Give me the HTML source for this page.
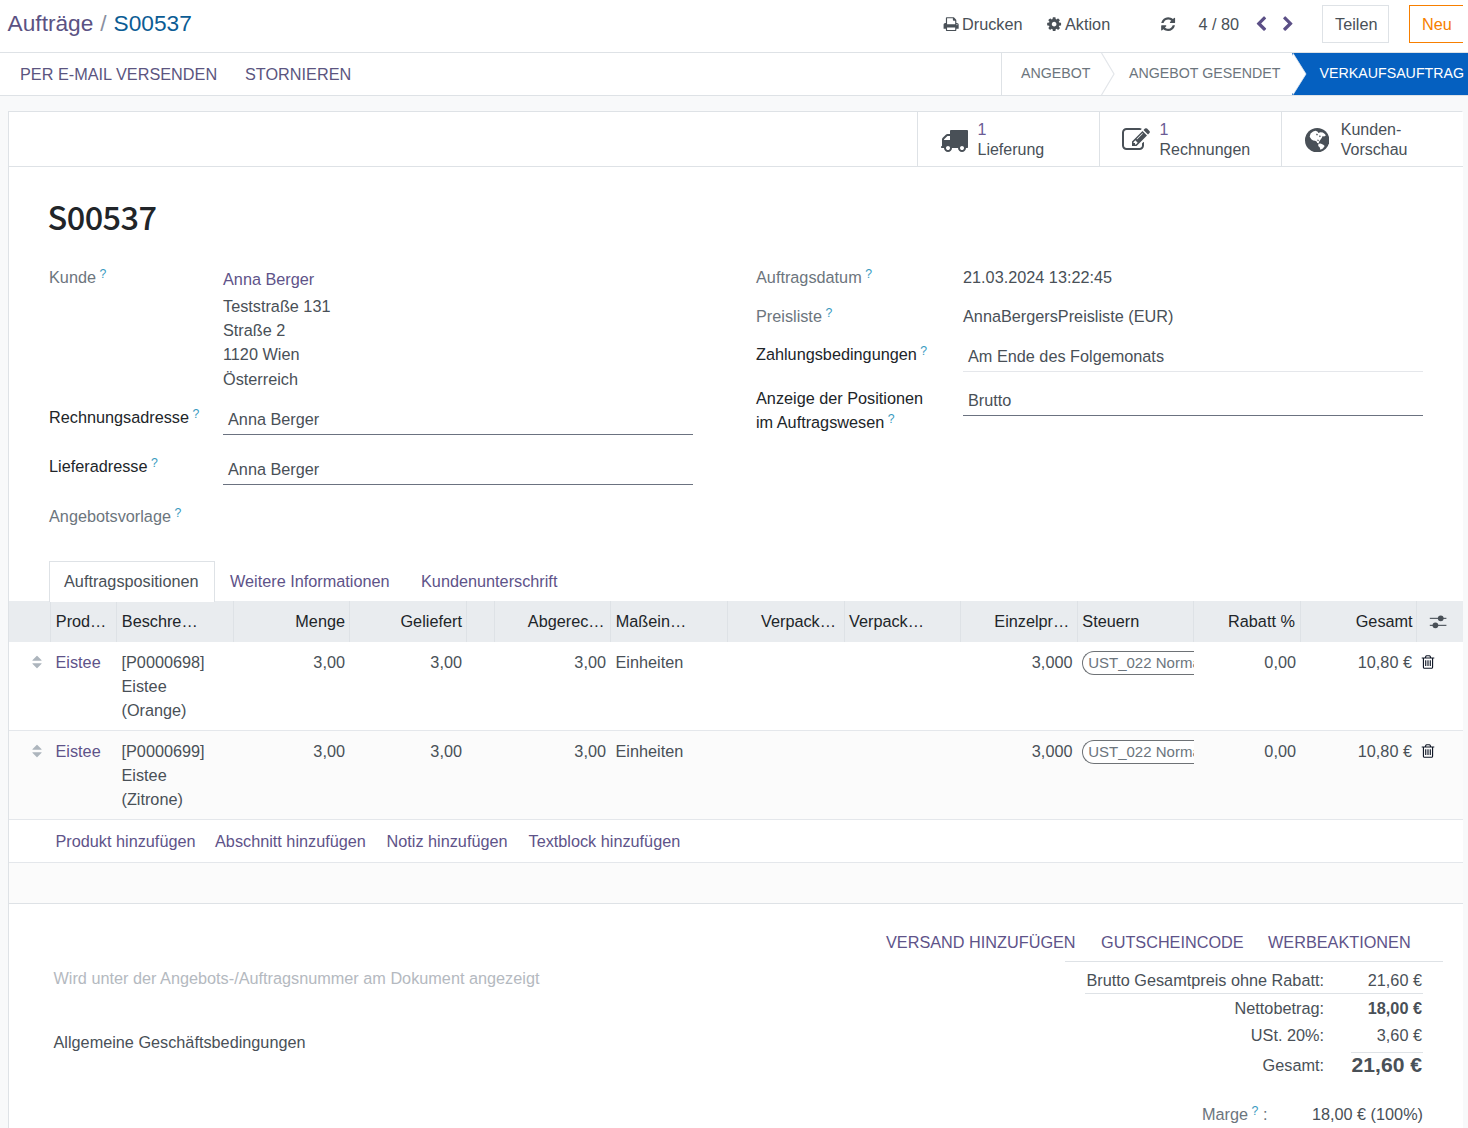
<!DOCTYPE html>
<html lang="de">
<head>
<meta charset="utf-8">
<title>Aufträge / S00537</title>
<style>
*{box-sizing:border-box;margin:0;padding:0}
html,body{width:1468px;height:1128px;overflow:hidden}
body{position:relative;background:#f8f9fa;font-family:"Liberation Sans",Arial,sans-serif;font-size:16.25px;line-height:24.375px;color:#495057}
.abs{position:absolute;white-space:nowrap}
a{color:#5e5389;text-decoration:none}
svg{display:block}
/* top control panel */
#cp{position:absolute;left:0;top:0;width:1468px;height:53px;background:#fff;border-bottom:1px solid #dee2e6}
#bc{left:7.6px;top:7.8px;font-size:22.7px;line-height:30px;color:#5b5283}
#bc b{font-weight:normal;color:#0b5c94}
#bc i{font-style:normal;color:#8a8fa0;padding:0 0.65px}
.cpt{top:12px;line-height:24px;color:#495057}
.btn{position:absolute;top:5px;height:38px;border:1px solid #dee2e6;border-radius:0;background:#fff;line-height:36px;text-align:left}
/* button bar */
#bb{position:absolute;left:0;top:53px;width:1468px;height:43px;background:#fff;border-bottom:1px solid #dee2e6}
.bbt{top:9px;line-height:24px;color:#5b5580}
.st{top:0;height:42px;line-height:41px;font-size:14.22px;color:#6c757d}
/* sheet */
#sheet{position:absolute;left:8px;top:111px;width:1455px;height:1030px;background:#fff;border:1px solid #dee2e6;border-bottom:0;border-right:1px solid #fff}
#bbox{position:absolute;left:0;top:0;width:1454px;height:55px;border-bottom:1px solid #dee2e6}
.sb{position:absolute;top:0;height:54px;width:182px;border-left:1px solid #dee2e6}
.sb .n{font-size:16px;position:absolute;left:59.5px;top:7.6px;line-height:20px;color:#6b5b95}
.sb .t{font-size:16px;position:absolute;left:59.5px;top:28px;line-height:20px;color:#495057}
.lbl{color:#212529}
.lbl.ro{color:#6c757d}
sup.q{color:#3a9bbf;font-size:12.3px;line-height:0;position:relative;top:-4.8px;vertical-align:baseline;margin-left:3.5px}
.ul{position:absolute;height:1px;background:#6b7280}
#title{font-family:"Noto Sans CJK SC","Liberation Sans",sans-serif;font-weight:500;font-size:32.5px;line-height:44px;color:#212529;letter-spacing:-0.6px}
/* table */
.th{position:absolute;top:0;height:40px;line-height:40px;color:#212529;border-left:1px solid #dee2e6;padding:0 5px;overflow:hidden;white-space:nowrap}
.th2{line-height:41.5px;color:#212529}
.r{text-align:right}
.td{position:absolute;white-space:nowrap;line-height:24.375px}
.tag{position:absolute;height:24px;border:1px solid #6e7276;border-right:0;border-radius:12px 0 0 12px;padding-left:5.2px;line-height:21.4px;font-size:15px;color:#6c757d;overflow:hidden;white-space:nowrap;background:#fff}
</style>
</head>
<body>

<!-- CONTROL PANEL -->
<div id="cp">
  <div id="bc" class="abs">Aufträge<i> / </i><b>S00537</b></div>
  <svg class="abs" style="left:942.8px;top:15.8px" width="16.25" height="16.25" viewBox="0 0 1792 1792"><path fill="#495057" d="M448 1536h896v-256h-896v256zm0-640h896v-384h-160q-40 0-68-28t-28-68v-160h-640v640zm1152 64q0-26-19-45t-45-19-45 19-19 45 19 45 45 19 45-19 19-45zm128 0v416q0 13-9.5 22.5t-22.5 9.5h-224v160q0 40-28 68t-68 28h-960q-40 0-68-28t-28-68v-160h-224q-13 0-22.5-9.5t-9.5-22.5v-416q0-79 56.5-135.5t135.5-56.5h64v-544q0-40 28-68t68-28h672q40 0 88 20t76 48l152 152q28 28 48 76t20 88v256h64q79 0 135.5 56.5t56.5 135.5z"/></svg>
  <div class="abs cpt" style="left:962px">Drucken</div>
  <svg class="abs" style="left:1046px;top:15.8px" width="16.25" height="16.25" viewBox="0 0 1792 1792"><path fill="#495057" d="M1152 896q0-106-75-181t-181-75-181 75-75 181 75 181 181 75 181-75 75-181zm512-109v222q0 12-8 23t-20 13l-185 28q-19 54-39 91 35 50 107 138 10 12 10 25t-9 23q-27 37-99 108t-94 71q-12 0-26-9l-138-108q-44 23-91 38-16 136-29 186-7 28-36 28h-222q-14 0-24.5-8.5t-11.5-21.5l-28-184q-49-16-90-37l-141 107q-10 9-25 9-14 0-25-11-126-114-165-168-7-10-7-23 0-12 8-23 15-21 51-66.5t54-70.5q-27-50-41-99l-183-27q-13-2-21-12.5t-8-23.5v-222q0-12 8-23t19-13l186-28q14-46 39-92-40-57-107-138-10-12-10-24 0-10 9-23 26-36 98.5-107.5t94.5-71.5q13 0 26 10l138 107q44-23 91-38 16-136 29-186 7-28 36-28h222q14 0 24.5 8.5t11.5 21.5l28 184q49 16 90 37l142-107q9-9 24-9 13 0 25 10 129 119 165 170 7 8 7 22 0 12-8 23-15 21-51 66.5t-54 70.5q26 50 41 98l183 28q13 2 21 12.5t8 23.5z"/></svg>
  <div class="abs cpt" style="left:1065px">Aktion</div>
  <svg class="abs" style="left:1159.7px;top:15.8px" width="16.25" height="16.25" viewBox="0 0 1792 1792"><path fill="#495057" d="M1639 1056q0 5-1 7-64 268-268 434.5t-478 166.5q-146 0-282.5-55t-243.5-157l-129 129q-19 19-45 19t-45-19-19-45v-448q0-26 19-45t45-19h448q26 0 45 19t19 45-19 45l-137 137q71 66 161 102t187 36q134 0 250-65t186-179q11-17 53-117 8-23 30-23h192q13 0 22.5 9.5t9.5 22.5zm25-800v448q0 26-19 45t-45 19h-448q-26 0-45-19t-19-45 19-45l138-138q-148-137-349-137-134 0-250 65t-186 179q-11 17-53 117-8 23-30 23h-199q-13 0-22.5-9.5t-9.5-22.5v-7q65-268 270-434.5t480-166.5q146 0 284 55.5t245 156.5l130-129q19-19 45-19t45 19 19 45z"/></svg>
  <div class="abs cpt" style="left:1198.5px">4 / 80</div>
  <svg class="abs" style="left:1252.5px;top:16.3px" width="16.25" height="16.25" viewBox="0 0 1792 1792"><path fill="#5b4f86" d="M1427 301l-531 531 531 531q19 19 19 45t-19 45l-166 166q-19 19-45 19t-45-19l-742-742q-19-19-19-45t19-45l742-742q19-19 45-19t45 19l166 166q19 19 19 45t-19 45z"/></svg>
  <svg class="abs" style="left:1279.7px;top:16.3px" width="16.25" height="16.25" viewBox="0 0 1792 1792"><path fill="#5b4f86" d="M1363 877l-742 742q-19 19-45 19t-45-19l-166-166q-19-19-19-45t19-45l531-531-531-531q-19-19-19-45t19-45l166-166q19-19 45-19t45 19l742 742q19 19 19 45t-19 45z"/></svg>
  <div class="btn" style="left:1322px;width:67px;padding-left:12px;color:#495057">Teilen</div>
  <div class="btn" style="left:1409px;width:60px;padding-left:12px;color:#f77f00;border-color:#f77f00;border-right:0;width:54px">Neu</div>
</div>

<!-- BUTTON BAR -->
<div id="bb">
  <div class="abs bbt" style="left:20px">PER E-MAIL VERSENDEN</div>
  <div class="abs bbt" style="left:245px">STORNIEREN</div>
  <div class="abs" style="left:1001px;top:0;width:1px;height:42px;background:#dee2e6"></div>
  <div class="abs st" style="left:1021px">ANGEBOT</div>
  <svg class="abs" style="left:1100px;top:0" width="16" height="42" viewBox="0 0 16 42"><path d="M1.5 0 L14 21 L1.5 42" fill="none" stroke="#e3e6ea" stroke-width="1.2"/></svg>
  <div class="abs st" style="left:1129px">ANGEBOT GESENDET</div>
  <svg class="abs" style="left:1291px;top:0" width="177" height="42" viewBox="0 0 177 42"><path d="M1 0 H177 V42 H1 Z" fill="#0560c0"/><path d="M1 2.5 L2 0.3 L15 21 L2 41.7 L1 39.5 Z" fill="#fff"/><path d="M2 0.3 L15 21 L2 41.7" fill="none" stroke="#e3e8ef" stroke-width="0.8"/></svg>
  <div class="abs st" style="left:1319.5px;color:#fff">VERKAUFSAUFTRAG</div>
</div>

<!-- SHEET -->
<div id="sheet">
  <div id="bbox">
  <div class="sb" style="left:908px">
    <svg class="abs" style="left:22px;top:14px" width="28" height="28" viewBox="0 0 1792 1792"><path fill="#495057" d="M640 1408q0-52-38-90t-90-38-90 38-38 90 38 90 90 38 90-38 38-90zm-384-512h384v-256h-158q-13 0-22 9l-195 195q-9 9-9 22v30zm1280 512q0-52-38-90t-90-38-90 38-38 90 38 90 90 38 90-38 38-90zm256-1088v1024q0 15-4 26.5t-13.5 18.5-16.5 11.5-23.5 6-22.5 2-25.5 0-22.5-.5q0 106-75 181t-181 75-181-75-75-181h-384q0 106-75 181t-181 75-181-75-75-181h-64q-3 0-22.5.5t-25.5 0-22.5-2-23.5-6-16.5-11.5-13.5-18.5-4-26.5q0-26 19-45t45-19v-320q0-8-.5-35t0-38 2.5-34.5 6.5-37 14-30.5 22.5-30l198-198q19-19 50.5-32t58.5-13h160v-192q0-26 19-45t45-19h1024q26 0 45 19t19 45z"/></svg>
    <div class="n">1</div><div class="t">Lieferung</div>
  </div>
  <div class="sb" style="left:1090px">
    <svg class="abs" style="left:21.7px;top:14px" width="28" height="28" viewBox="0 0 1792 1792"><path fill="#495057" d="M888 1184l116-116-152-152-116 116v56h96v96h56zm440-720q-16-16-33 1l-350 350q-17 17-1 33t33-1l350-350q17-17 1-33zm80 594v190q0 119-84.5 203.5t-203.5 84.5h-832q-119 0-203.5-84.5t-84.5-203.5v-832q0-119 84.5-203.5t203.5-84.5h832q63 0 117 25 15 7 18 23 3 17-9 29l-49 49q-14 14-32 8-23-6-45-6h-832q-66 0-113 47t-47 113v832q0 66 47 113t113 47h832q66 0 113-47t47-113v-126q0-13 9-22l64-64q15-15 35-7t20 29zm-96-738l288 288-672 672h-288v-288zm444 132l-92 92-288-288 92-92q28-28 68-28t68 28l152 152q28 28 28 68t-28 68z"/></svg>
    <div class="n">1</div><div class="t">Rechnungen</div>
  </div>
  <div class="sb" style="left:1272px;width:181px">
    <svg class="abs" style="left:22.8px;top:15.7px" width="24.4" height="24.4" viewBox="0 0 24 24"><circle cx="12" cy="12" r="12" fill="#495057"/><path fill="#fff" d="M4.6 8.5 L5.5 5.5 L8 3.4 L10.5 2.8 L12.5 3.6 L13.2 5 L15 4.2 L17.5 4.4 L19.8 6.2 L20.4 7.6 L18.6 8.4 L17.4 7.8 L16.6 9.6 L15.2 11.6 L14 13.4 L13.4 15 L12 14.8 L11.4 13.2 L9.8 12.6 L8 12.4 L6.2 11 Z M13.2 15.6 L15.4 15.2 L18 16.4 L19.4 17.8 L17.6 20.2 L15.2 21.4 L14.4 19 L13 17.6 Z"/><path fill="#495057" d="M11.5 5.5l1.200.6-.6 1.200-1.200-.4zM14.6 7.200l1 .8-1 1-.8-.8zM12.4 11.400l1.200.4-.4 1.200-1.200-.6z"/></svg>
    <div class="t" style="top:8px;left:58.8px">Kunden-</div><div class="t" style="left:58.8px">Vorschau</div>
  </div>
</div>

  <div class="abs" id="title" style="left:38.6px;top:82px">S00537</div>
  <div class="abs lbl ro" style="left:40px;top:152.61px">Kunde<sup class="q">?</sup></div>
  <div class="abs" style="left:214px;top:154.61px"><a>Anna Berger</a></div>
  <div class="abs" style="left:214px;top:181.61px">Teststraße 131</div>
  <div class="abs" style="left:214px;top:205.99px">Straße 2</div>
  <div class="abs" style="left:214px;top:230.36px">1120 Wien</div>
  <div class="abs" style="left:214px;top:254.74px">Österreich</div>
  <div class="abs lbl" style="left:40px;top:292.61px">Rechnungsadresse<sup class="q">?</sup></div>
  <div class="abs" style="left:219px;top:294.61px">Anna Berger</div>
  <div class="ul" style="left:214px;top:322px;width:470px"></div>
  <div class="abs lbl" style="left:40px;top:341.61px">Lieferadresse<sup class="q">?</sup></div>
  <div class="abs" style="left:219px;top:344.61px">Anna Berger</div>
  <div class="ul" style="left:214px;top:372px;width:470px"></div>
  <div class="abs lbl ro" style="left:40px;top:391.61px">Angebotsvorlage<sup class="q">?</sup></div>
  <div class="abs lbl ro" style="left:747px;top:152.61px">Auftragsdatum<sup class="q">?</sup></div>
  <div class="abs" style="left:954px;top:152.61px">21.03.2024 13:22:45</div>
  <div class="abs lbl ro" style="left:747px;top:191.61px">Preisliste<sup class="q">?</sup></div>
  <div class="abs" style="left:954px;top:191.61px">AnnaBergersPreisliste (EUR)</div>
  <div class="abs lbl" style="left:747px;top:229.61px">Zahlungsbedingungen<sup class="q">?</sup></div>
  <div class="abs" style="left:959px;top:231.61px">Am Ende des Folgemonats</div>
  <div class="ul" style="left:954px;top:259px;width:460px;background:#e5e7eb"></div>
  <div class="abs lbl" style="left:747px;top:273.61px">Anzeige der Positionen<br>im Auftragswesen<sup class="q">?</sup></div>
  <div class="abs" style="left:959px;top:275.61px">Brutto</div>
  <div class="ul" style="left:954px;top:303px;width:460px"></div>
  <div class="abs" style="left:40px;top:449px;width:166px;height:41px;border:1px solid #dee2e6;border-bottom:0;background:#fff;z-index:2"></div>
  <div class="abs" style="left:55px;top:456.61px;z-index:3;color:#495057">Auftragspositionen</div>
  <div class="abs" style="left:221px;top:456.61px"><a>Weitere Informationen</a></div>
  <div class="abs" style="left:412px;top:456.61px"><a>Kundenunterschrift</a></div>

  <div class="abs" style="left:0;top:489px;width:1454px;height:41px;background:#e9ecef"></div>
  <div class="abs" style="left:41px;top:489px;width:1px;height:41px;background:#dee2e6"></div>
  <div class="abs" style="left:107px;top:489px;width:1px;height:41px;background:#dee2e6"></div>
  <div class="abs" style="left:224px;top:489px;width:1px;height:41px;background:#dee2e6"></div>
  <div class="abs" style="left:340px;top:489px;width:1px;height:41px;background:#dee2e6"></div>
  <div class="abs" style="left:457px;top:489px;width:1px;height:41px;background:#dee2e6"></div>
  <div class="abs" style="left:485px;top:489px;width:1px;height:41px;background:#dee2e6"></div>
  <div class="abs" style="left:601px;top:489px;width:1px;height:41px;background:#dee2e6"></div>
  <div class="abs" style="left:718px;top:489px;width:1px;height:41px;background:#dee2e6"></div>
  <div class="abs" style="left:835px;top:489px;width:1px;height:41px;background:#dee2e6"></div>
  <div class="abs" style="left:951px;top:489px;width:1px;height:41px;background:#dee2e6"></div>
  <div class="abs" style="left:1068px;top:489px;width:1px;height:41px;background:#dee2e6"></div>
  <div class="abs" style="left:1184px;top:489px;width:1px;height:41px;background:#dee2e6"></div>
  <div class="abs" style="left:1291px;top:489px;width:1px;height:41px;background:#dee2e6"></div>
  <div class="abs" style="left:1407px;top:489px;width:1px;height:41px;background:#dee2e6"></div>
  <div class="abs th2" style="left:46.8px;top:489px">Prod…</div>
  <div class="abs th2" style="left:112.8px;top:489px">Beschre…</div>
  <div class="abs th2" style="right:1117.0px;top:489px">Menge</div>
  <div class="abs th2" style="right:1000.1px;top:489px">Geliefert</div>
  <div class="abs th2" style="left:518.8px;top:489px">Abgerec…</div>
  <div class="abs th2" style="left:606.8px;top:489px">Maßein…</div>
  <div class="abs th2" style="left:752.0px;top:489px">Verpack…</div>
  <div class="abs th2" style="left:840.0px;top:489px">Verpack…</div>
  <div class="abs th2" style="left:985.3px;top:489px">Einzelpr…</div>
  <div class="abs th2" style="left:1073.3px;top:489px">Steuern</div>
  <div class="abs th2" style="right:167.1px;top:489px">Rabatt %</div>
  <div class="abs th2" style="right:49.4px;top:489px">Gesamt</div>
  <svg class="abs" style="left:1419.5px;top:501px" width="18" height="18" viewBox="0 0 18 18"><g fill="#495057"><rect x="0.8" y="4.8" width="16.6" height="1.1"/><rect x="0.8" y="11.8" width="16.6" height="1.1"/><circle cx="11.75" cy="5.35" r="2.9"/><circle cx="6.4" cy="12.35" r="2.9"/></g></svg>
  <div class="abs" style="left:0;top:529.5px;width:1454px;height:89px;background:#fff;border-bottom:1px solid #e4e7eb"></div>
  <svg class="abs" style="left:20px;top:542px" width="16" height="16" viewBox="0 0 1792 1792"><path fill="#adb5bd" d="M1408 1088q0 26-19 45l-448 448q-19 19-45 19t-45-19l-448-448q-19-19-19-45t19-45 45-19h896q26 0 45 19t19 45zm0-384q0 26-19 45t-45 19h-896q-26 0-45-19t-19-45 19-45l448-448q19-19 45-19t45 19l448 448q19 19 19 45z"/></svg>
  <div class="td" style="left:46.5px;top:537.61px"><a>Eistee</a></div>
  <div class="td" style="left:112.5px;top:537.61px">[P0000698]<br>Eistee<br>(Orange)</div>
  <div class="td r" style="right:1117px;top:537.61px">3,00</div>
  <div class="td r" style="right:1000px;top:537.61px">3,00</div>
  <div class="td r" style="right:856px;top:537.61px">3,00</div>
  <div class="td r" style="right:389.5px;top:537.61px">3,000</div>
  <div class="td r" style="right:166px;top:537.61px">0,00</div>
  <div class="td r" style="right:50px;top:537.61px">10,80 €</div>
  <div class="td" style="left:606.5px;top:537.61px">Einheiten</div>
  <div class="tag" style="left:1073px;top:539px;width:112px">UST_022 Normalsteuersatz</div>
  <svg class="abs" style="left:1411px;top:542px" width="16" height="16" viewBox="0 0 1792 1792"><path fill="#111827" d="M704 736v576q0 14-9 23t-23 9h-64q-14 0-23-9t-9-23v-576q0-14 9-23t23-9h64q14 0 23 9t9 23zm256 0v576q0 14-9 23t-23 9h-64q-14 0-23-9t-9-23v-576q0-14 9-23t23-9h64q14 0 23 9t9 23zm256 0v576q0 14-9 23t-23 9h-64q-14 0-23-9t-9-23v-576q0-14 9-23t23-9h64q14 0 23 9t9 23zm128 724v-948h-896v948q0 22 7 40.5t14.5 27 10.5 8.5h832q3 0 10.5-8.5t14.5-27 7-40.5zm-672-1076h448l-48-117q-7-9-17-11h-317q-10 2-17 11zm928 32v64q0 14-9 23t-23 9h-96v948q0 83-47 143.5t-113 60.5h-832q-66 0-113-58.5t-47-141.5v-952h-96q-14 0-23-9t-9-23v-64q0-14 9-23t23-9h309l70-167q15-37 54-63t79-26h320q40 0 79 26t54 63l70 167h309q14 0 23 9t9 23z"/></svg>
  <div class="abs" style="left:0;top:618.5px;width:1454px;height:89px;background:#fbfbfb;border-bottom:1px solid #e4e7eb"></div>
  <svg class="abs" style="left:20px;top:631px" width="16" height="16" viewBox="0 0 1792 1792"><path fill="#adb5bd" d="M1408 1088q0 26-19 45l-448 448q-19 19-45 19t-45-19l-448-448q-19-19-19-45t19-45 45-19h896q26 0 45 19t19 45zm0-384q0 26-19 45t-45 19h-896q-26 0-45-19t-19-45 19-45l448-448q19-19 45-19t45 19l448 448q19 19 19 45z"/></svg>
  <div class="td" style="left:46.5px;top:626.61px"><a>Eistee</a></div>
  <div class="td" style="left:112.5px;top:626.61px">[P0000699]<br>Eistee<br>(Zitrone)</div>
  <div class="td r" style="right:1117px;top:626.61px">3,00</div>
  <div class="td r" style="right:1000px;top:626.61px">3,00</div>
  <div class="td r" style="right:856px;top:626.61px">3,00</div>
  <div class="td r" style="right:389.5px;top:626.61px">3,000</div>
  <div class="td r" style="right:166px;top:626.61px">0,00</div>
  <div class="td r" style="right:50px;top:626.61px">10,80 €</div>
  <div class="td" style="left:606.5px;top:626.61px">Einheiten</div>
  <div class="tag" style="left:1073px;top:628px;width:112px">UST_022 Normalsteuersatz</div>
  <svg class="abs" style="left:1411px;top:631px" width="16" height="16" viewBox="0 0 1792 1792"><path fill="#111827" d="M704 736v576q0 14-9 23t-23 9h-64q-14 0-23-9t-9-23v-576q0-14 9-23t23-9h64q14 0 23 9t9 23zm256 0v576q0 14-9 23t-23 9h-64q-14 0-23-9t-9-23v-576q0-14 9-23t23-9h64q14 0 23 9t9 23zm256 0v576q0 14-9 23t-23 9h-64q-14 0-23-9t-9-23v-576q0-14 9-23t23-9h64q14 0 23 9t9 23zm128 724v-948h-896v948q0 22 7 40.5t14.5 27 10.5 8.5h832q3 0 10.5-8.5t14.5-27 7-40.5zm-672-1076h448l-48-117q-7-9-17-11h-317q-10 2-17 11zm928 32v64q0 14-9 23t-23 9h-96v948q0 83-47 143.5t-113 60.5h-832q-66 0-113-58.5t-47-141.5v-952h-96q-14 0-23-9t-9-23v-64q0-14 9-23t23-9h309l70-167q15-37 54-63t79-26h320q40 0 79 26t54 63l70 167h309q14 0 23 9t9 23z"/></svg>
  <div class="abs" style="left:0;top:707.5px;width:1454px;height:43.5px;background:#fff;border-bottom:1px solid #e4e7eb"></div>
  <div class="td" style="left:46.5px;top:716.61px"><a>Produkt hinzufügen</a></div>
  <div class="td" style="left:206px;top:716.61px"><a>Abschnitt hinzufügen</a></div>
  <div class="td" style="left:377.5px;top:716.61px"><a>Notiz hinzufügen</a></div>
  <div class="td" style="left:519.5px;top:716.61px"><a>Textblock hinzufügen</a></div>
  <div class="abs" style="left:0;top:751px;width:1454px;height:40.5px;background:#fbfbfb;border-bottom:1px solid #dee2e6"></div>
  <div class="td" style="left:877px;top:817.61px"><a>VERSAND HINZUFÜGEN</a></div>
  <div class="td" style="left:1092px;top:817.61px"><a>GUTSCHEINCODE</a></div>
  <div class="td" style="left:1259px;top:817.61px"><a>WERBEAKTIONEN</a></div>
  <div class="ul" style="left:1056px;top:849px;width:378px;background:#dee2e6"></div>
  <div class="td r" style="right:138px;top:855.61px">Brutto Gesamtpreis ohne Rabatt:</div>
  <div class="td r" style="right:40px;top:855.61px;">21,60 €</div>
  <div class="ul" style="left:1076px;top:881px;width:338px;background:#dee2e6"></div>
  <div class="td r" style="right:138px;top:883.61px">Nettobetrag:</div>
  <div class="td r" style="right:40px;top:883.61px;font-weight:bold">18,00 €</div>
  <div class="td r" style="right:138px;top:910.61px">USt. 20%:</div>
  <div class="td r" style="right:40px;top:910.61px;">3,60 €</div>
  <div class="ul" style="left:1342px;top:940px;width:72px;background:#dee2e6"></div>
  <div class="td r" style="right:138px;top:940.61px">Gesamt:</div>
  <div class="td r" style="right:40px;top:940.61px;font-weight:bold;font-size:21.125px">21,60 €</div>
  <div class="td lbl ro" style="left:1193px;top:989.61px">Marge<sup class="q">?</sup> :</div>
  <div class="td r" style="right:39px;top:989.61px">18,00 € (100%)</div>
  <div class="td" style="left:44.5px;top:853.61px;color:#b4b9c0">Wird unter der Angebots-/Auftragsnummer am Dokument angezeigt</div>
  <div class="td" style="left:44.5px;top:917.61px">Allgemeine Geschäftsbedingungen</div>

</div>

</body>
</html>
